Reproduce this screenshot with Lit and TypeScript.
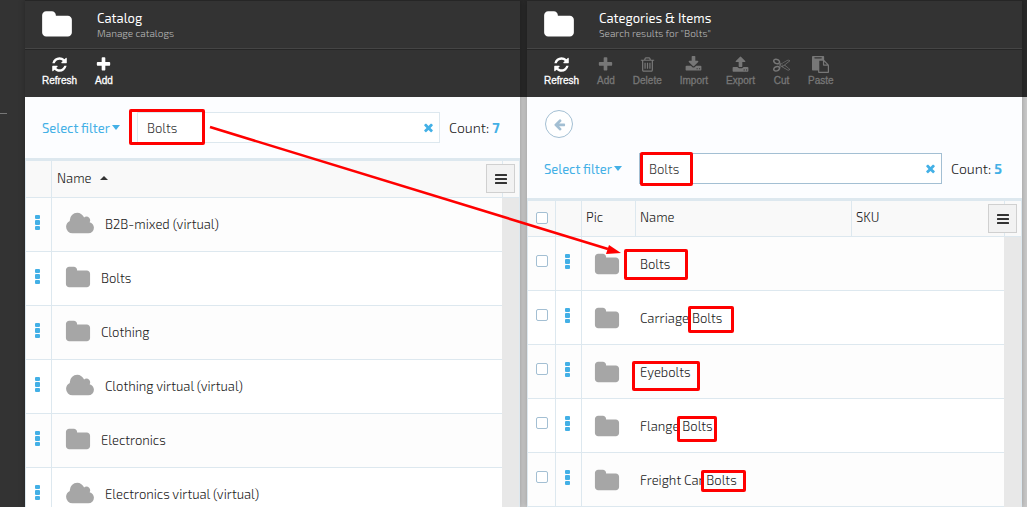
import { LitElement, html, svg, css, nothing } from "lit";
import { customElement, property } from "lit/decorators.js";
import { classMap } from "lit/directives/class-map.js";

const ICONS: Record<string, string> = {
  refresh: "M1639 1056q0 5-1 7-64 268-268 434.5t-478 166.5q-146 0-282.5-55t-243.5-157l-129 129q-19 19-45 19t-45-19-19-45v-448q0-26 19-45t45-19h448q26 0 45 19t19 45-19 45l-137 137q71 66 161 102t187 36q134 0 250-65t186-179q11-17 53-117 8-23 30-23h192q13 0 22.5 9.5t9.5 22.5zm25-800v448q0 26-19 45t-45 19h-448q-26 0-45-19t-19-45 19-45l138-138q-148-137-349-137-134 0-250 65t-186 179q-11 17-53 117-8 23-30 23h-199q-13 0-22.5-9.5t-9.5-22.5v-7q65-268 270-434.5t480-166.5q146 0 284 55.5t245 156.5l130-129q19-19 45-19t45 19 19 45z",
  add: "M1600 736v192q0 40-28 68t-68 28h-416v416q0 40-28 68t-68 28h-192q-40 0-68-28t-28-68v-416h-416q-40 0-68-28t-28-68v-192q0-40 28-68t68-28h416v-416q0-40 28-68t68-28h192q40 0 68 28t28 68v416h416q40 0 68 28t28 68z",
  trash: "M704 736v576q0 14-9 23t-23 9h-64q-14 0-23-9t-9-23v-576q0-14 9-23t23-9h64q14 0 23 9t9 23zm256 0v576q0 14-9 23t-23 9h-64q-14 0-23-9t-9-23v-576q0-14 9-23t23-9h64q14 0 23 9t9 23zm256 0v576q0 14-9 23t-23 9h-64q-14 0-23-9t-9-23v-576q0-14 9-23t23-9h64q14 0 23 9t9 23zm128 724v-948h-896v948q0 22 7 40.5t14.5 27 10.5 8.5h832q3 0 10.5-8.5t14.5-27 7-40.5zm-672-1076h448l-48-117q-7-9-17-11h-317q-10 2-17 11zm928 32v64q0 14-9 23t-23 9h-96v948q0 83-47 143.5t-113 60.5h-832q-66 0-113-58.5t-47-141.5v-952h-96q-14 0-23-9t-9-23v-64q0-14 9-23t23-9h309l70-167q15-37 54-63t79-26h320q40 0 79 26t54 63l70 167h309q14 0 23 9t9 23z",
  download: "M1344 1344q0-26-19-45t-45-19-45 19-19 45 19 45 45 19 45-19 19-45zm256 0q0-26-19-45t-45-19-45 19-19 45 19 45 45 19 45-19 19-45zm128-224v320q0 40-28 68t-68 28h-1472q-40 0-68-28t-28-68v-320q0-40 28-68t68-28h465l135 136q58 56 136 56t136-56l136-136h464q40 0 68 28t28 68zm-325-569q17 41-14 70l-448 448q-18 19-45 19t-45-19l-448-448q-31-29-14-70 17-39 59-39h256v-448q0-26 19-45t45-19h256q26 0 45 19t19 45v448h256q42 0 59 39z",
  upload: "M1344 1472q0-26-19-45t-45-19-45 19-19 45 19 45 45 19 45-19 19-45zm256 0q0-26-19-45t-45-19-45 19-19 45 19 45 45 19 45-19 19-45zm128-224v320q0 40-28 68t-68 28h-1472q-40 0-68-28t-28-68v-320q0-40 28-68t68-28h427q21 56 70.5 92t110.5 36h256q61 0 110.5-36t70.5-92h427q40 0 68 28t28 68zm-325-648q-17 40-59 40h-256v448q0 26-19 45t-45 19h-256q-26 0-45-19t-19-45v-448h-256q-42 0-59-40-17-39 14-69l448-448q18-19 45-19t45 19l448 448q31 30 14 69z",
  cut: "M960 896q26 0 45 19t19 45-19 45-45 19-45-19-19-45 19-45 45-19zm300 64l507 398q28 20 25 56-5 35-35 51l-128 64q-13 7-29 7-17 0-31-8l-690-387-110 66q-8 4-12 5 14 49 10 97-7 77-56 147.5t-132 123.5q-132 84-277 84-136 0-222-78-90-84-79-207 7-76 56-147t131-124q132-84 278-84 83 0 151 31 9-13 22-22l122-73-122-73q-13-9-22-22-68 31-151 31-146 0-278-84-82-53-131-124t-56-147q-5-59 15.5-113t63.5-93q85-79 222-79 145 0 277 84 83 52 132 123t56 148q4 48-10 97 4 1 12 5l110 66 690-387q14-8 31-8 16 0 29 7l128 64q30 16 35 51 3 36-25 56zm-681-260q46-42 21-108t-106-117q-92-59-192-59-74 0-113 36-46 42-21 108t106 117q92 59 192 59 74 0 113-36zm-85 745q81-51 106-117t-21-108q-39-36-113-36-100 0-192 59-81 51-106 117t21 108q39 36 113 36 100 0 192-59zm178-613l96 58v-11q0-36 33-56l14-8-79-44-26 26q-3 3-10 11t-12 12q-2 2-4 3.5t-3 2.5zm224 224l96 32 736-576-128-64-768 431v113l-160 96 9 8q2 2 7 6 4 4 11 12t11 12l26 26zm704 416l128-64-520-408-177 138q-2 3-13 7z",
  paste: "M768 1664h896v-640h-416q-40 0-68-28t-28-68v-416h-384v1152zm256-1440v-64q0-13-9.5-22.5t-22.5-9.5h-704q-13 0-22.5 9.5t-9.5 22.5v64q0 13 9.5 22.5t22.5 9.5h704q13 0 22.5-9.5t9.5-22.5zm256 672h299l-299-299v299zm512 128v672q0 40-28 68t-68 28h-960q-40 0-68-28t-28-68v-160h-544q-40 0-68-28t-28-68v-1344q0-40 28-68t68-28h1088q40 0 68 28t28 68v328q21 13 36 28l408 408q28 28 48 76t20 88z",
  folder: "M1728 608v704q0 92-66 158t-158 66h-1216q-92 0-158-66t-66-158v-960q0-92 66-158t158-66h320q92 0 158 66t66 158v32h672q92 0 158 66t66 158z",
  cloud: "M1984 1152q0 159-112.5 271.5t-271.5 112.5h-1088q-185 0-316.5-131.5t-131.5-316.5q0-132 71-241.5t187-163.5q-2-28-2-43 0-212 150-362t362-150q158 0 286.5 88t187.5 230q70-62 166-62 106 0 181 75t75 181q0 75-41 138 129 30 213 134.5t84 239.5z",
  times: "M1490 1322q0 40-28 68l-136 136q-28 28-68 28t-68-28l-294-294-294 294q-28 28-68 28t-68-28l-136-136q-28-28-28-68t28-68l294-294-294-294q-28-28-28-68t28-68l136-136q28-28 68-28t68 28l294 294 294-294q28-28 68-28t68 28l136 136q28 28 28 68t-28 68l-294 294 294 294q28 28 28 68z",
  back: "M1664 896v128q0 53-32.5 90.5t-84.5 37.5h-704l293 294q38 36 38 90t-38 90l-75 76q-37 37-90 37-52 0-91-37l-651-652q-37-37-37-90 0-52 37-91l651-650q38-38 91-38 52 0 90 38l75 74q38 38 38 91t-38 91l-293 293h704q52 0 84.5 37.5t32.5 90.5z",
};

const icon = (name: string, size: number) => {
  const box = name === "cloud" ? 2048 : 1792;
  return html`<svg width=${Math.round((size * box) / 1792)} height=${size} viewBox="0 0 ${box} 1792" fill="currentColor" aria-hidden="true"><path d=${ICONS[name]} /></svg>`;
};

const dots = html`<svg width="5" height="16" viewBox="0 0 5 16" fill="currentColor" aria-hidden="true">
  <rect width="5" height="4" rx="1" /><rect y="5" width="5" height="5" rx="1" /><rect y="11" width="5" height="4" rx="1" />
</svg>`;

const bars = html`<svg width="12" height="10" viewBox="0 0 12 10" fill="currentColor" aria-hidden="true">
  <rect y="0" width="12" height="2" rx="0.5" /><rect y="4" width="12" height="2" rx="0.5" /><rect y="8" width="12" height="2" rx="0.5" />
</svg>`;

interface Tool { icon: string; label: string; enabled: boolean }
interface Row { name: string; virtual?: boolean }

@customElement("app-blade")
export class AppBlade extends LitElement {
  @property() heading = "";
  @property() subheading = "";
  @property() keyword = "";
  @property({ type: Number }) count = 0;
  @property({ type: Boolean }) detailed = false;
  @property({ attribute: false }) tools: Tool[] = [];
  @property({ attribute: false }) rows: Row[] = [];

  static styles = css`
    :host {
      display: flex;
      flex-direction: column;
      flex: 1 1 0;
      min-width: 0;
      background: #fcfdff;
      box-shadow: 0 0 6px rgba(0, 0, 0, 0.25);
      color: #222;
      font: 300 13px/18px "Exo 2", Roboto, sans-serif;
    }
    button { border: 0; padding: 0; background: none; font: inherit; color: inherit; }
    svg { display: block; flex: none; }
    header { background: #333; color: #fff; border-top: 1px solid #262626; }
    .title {
      display: flex;
      align-items: center;
      gap: 24px;
      height: 48px;
      padding-left: 16px;
      border-bottom: 1px solid #454545;
      box-sizing: border-box;
    }
    h1 { margin: 0; font-size: 13px; line-height: 17px; font-weight: 400; }
    .sub { margin: 0; font-size: 10px; line-height: 13px; color: #bbb; }
    .tools {
      display: flex;
      gap: 18px;
      height: 48px;
      padding: 6px 17px 0;
      border-top: 1px solid #262626;
      box-sizing: border-box;
    }
    .tool {
      display: flex;
      flex-direction: column;
      align-items: center;
      gap: 1px;
      height: 32px;
      font: 10px/14px "Liberation Sans", sans-serif;
      -webkit-text-stroke: 0.3px currentColor;
    }
    .tool:disabled { color: #777; }
    .back {
      display: flex;
      align-items: center;
      justify-content: center;
      width: 28px;
      height: 28px;
      margin: 13px 0 0 18px;
      border: 1px solid #a3bfd3;
      border-radius: 50%;
      background: #fff;
      color: #a3bfd3;
    }
    .search { display: flex; align-items: center; padding: 15px 18px 15px 17px; }
    :host([detailed]) .search { padding-bottom: 14px; }
    .filter { display: flex; align-items: center; gap: 2px; width: 95px; font-weight: 400; color: #43b0e6; flex: none; }
    .field {
      position: relative;
      display: flex;
      align-items: center;
      flex: 1;
      min-width: 0;
      height: 31px;
      border: 1px solid #dde8ef;
      background: #fff;
      box-sizing: border-box;
      padding-right: 4px;
    }
    .field.focus { border-color: #a3bfd3; }
    input[type="search"] {
      flex: 1;
      min-width: 0;
      border: 0;
      outline: 0;
      padding: 0 9px;
      background: none;
      appearance: none;
      font: inherit;
      color: #333;
    }
    input::-webkit-search-cancel-button { display: none; }
    .clear { color: #43b0e6; }
    .count { min-width: 53px; margin-left: 9px; font-size: 14px; white-space: nowrap; }
    .count b { font-weight: 700; color: #43b0e6; }
    .grid { position: relative; flex: 1; min-height: 0; border-top: 3px solid #dde8ef; }
    .menu {
      position: absolute;
      top: 3px;
      right: 5px;
      display: flex;
      align-items: center;
      justify-content: center;
      width: 29px;
      height: 29px;
      border: 1px solid #d0d0d0;
      background: #f2f2f2;
      color: #333;
    }
    table { width: 100%; table-layout: fixed; border-collapse: separate; border-spacing: 0; }
    th, td { padding: 0; box-sizing: border-box; border-left: 1px solid #dde8ef; border-bottom: 1px solid #dde8ef; text-align: left; }
    th { height: 37px; background: #f9f9f9; font-weight: inherit; padding: 0 5px 3px; }
    .detailed th { height: 36px; padding: 0 4px 3px; }
    td { height: 54px; background: #fdfdfd; }
    tr:nth-child(even) td { background: #fff; }
    .check { width: 28px; }
    .act { width: 26px; }
    .pic { width: 54px; }
    .sku { width: 153px; }
    .edge { width: 18px; }
    td.track, tr:nth-child(even) td.track { background: #e8e8e8; border: 0; border-right: 1px solid #dde8ef; }
    th:last-child { border-right: 1px solid #dde8ef; }
    td.plain { border-left: 0; }
    .sort { display: inline-flex; align-items: center; gap: 8px; }
    .dots { display: flex; justify-content: center; width: 100%; padding: 0 2px 3px 0; box-sizing: border-box; color: #43b0e6; }
    .item { display: flex; align-items: center; gap: 10px; padding: 0 0 2px 13px; }
    .item svg, .thumb { color: #a6a6a6; }
    .thumb { display: flex; padding: 2px 0 0 12px; }
    .label { padding: 1px 5px 0; }
    input[type="checkbox"] {
      display: block;
      width: 12px;
      height: 12px;
      margin: 0 auto;
      appearance: none;
      box-sizing: border-box;
      border: 1px solid #a3bfd3;
      border-radius: 2px;
      background: #fff;
    }
    td input[type="checkbox"] { margin-bottom: 6px; }
    .detailed th.box { padding: 0 0 2px; }
  `;

  private renderRow(row: Row) {
    const menu = html`<td><button class="dots" aria-label="Actions for ${row.name}">${dots}</button></td>`;
    return this.detailed
      ? html`<tr>
          <td><input type="checkbox" aria-label="Select ${row.name}" /></td>
          ${menu}
          <td><span class="thumb">${icon("folder", 26)}</span></td>
          <td class="plain"><div class="label">${row.name}</div></td>
          <td class="plain"></td>
          <td class="track"></td>
        </tr>`
      : html`<tr>
          ${menu}
          <td><div class="item">${icon(row.virtual ? "cloud" : "folder", 26)}<span>${row.name}</span></div></td>
          <td class="track"></td>
        </tr>`;
  }

  render() {
    return html`
      <header>
        <div class="title">
          ${icon("folder", 32)}
          <div><h1>${this.heading}</h1><p class="sub">${this.subheading}</p></div>
        </div>
        <nav class="tools">
          ${this.tools.map((t) => html`<button class="tool" ?disabled=${!t.enabled}>${icon(t.icon, 17)}<span>${t.label}</span></button>`)}
        </nav>
      </header>
      ${this.detailed ? html`<button class="back" aria-label="Back">${icon("back", 13)}</button>` : nothing}
      <div class="search">
        <button class="filter">Select filter
          <svg width="8" height="5" viewBox="0 0 8 5" fill="currentColor" aria-hidden="true"><path d="M0 0h8L4 5z" /></svg>
        </button>
        <div class=${classMap({ field: true, focus: this.detailed })}>
          <input type="search" aria-label="Search keyword" .value=${this.keyword} />
          <button class="clear" aria-label="Clear keyword">${icon("times", 13)}</button>
        </div>
        <span class="count">Count: <b>${this.count}</b></span>
      </div>
      <div class="grid">
        <table class=${classMap({ detailed: this.detailed })}>
          <thead>
            <tr>
              ${this.detailed
                ? html`<th class="check box"><input type="checkbox" aria-label="Select all" /></th>
                    <th class="act"></th><th class="pic">Pic</th><th>Name</th><th class="sku">SKU</th>`
                : html`<th class="act"></th>
                    <th><span class="sort">Name
                      <svg width="8" height="4" viewBox="0 0 8 4" fill="#333" aria-hidden="true"><path d="M0 4h8L4 0z" /></svg></span></th>`}
              <th class="edge"></th>
            </tr>
          </thead>
          <tbody>${this.rows.map((r) => this.renderRow(r))}</tbody>
        </table>
        <button class="menu" aria-label="Grid menu">${bars}</button>
      </div>
    `;
  }
}

/* x, y, width, height of each highlight frame */
const FRAMES = [
  [129, 109, 76, 36],
  [640, 152, 53, 34],
  [624, 249, 64, 31],
  [688, 306, 46, 27],
  [632, 361, 68, 30],
  [677, 416, 40, 26],
  [701, 470, 45, 22],
];

@customElement("app-root")
export class AppRoot extends LitElement {
  static styles = css`
    :host { display: block; position: relative; height: 100vh; overflow: hidden; }
    main {
      display: flex;
      gap: 7px;
      height: 100%;
      padding-right: 5px;
      box-sizing: border-box;
      background: linear-gradient(#292929 97px, #cacaca 97px);
    }
    aside { width: 25px; flex: none; margin-right: -7px; padding-top: 113px; background: #333; box-sizing: border-box; }
    hr { width: 7px; margin: 0; border: 0; border-top: 1px solid #777; }
    .marks { position: absolute; inset: 0; width: 100%; height: 100%; pointer-events: none; }
  `;

  private catalogTools: Tool[] = [
    { icon: "refresh", label: "Refresh", enabled: true },
    { icon: "add", label: "Add", enabled: true },
  ];
  private itemTools: Tool[] = [
    { icon: "refresh", label: "Refresh", enabled: true },
    { icon: "add", label: "Add", enabled: false },
    { icon: "trash", label: "Delete", enabled: false },
    { icon: "download", label: "Import", enabled: false },
    { icon: "upload", label: "Export", enabled: false },
    { icon: "cut", label: "Cut", enabled: false },
    { icon: "paste", label: "Paste", enabled: false },
  ];
  private catalogs: Row[] = [
    { name: "B2B-mixed (virtual)", virtual: true },
    { name: "Bolts" },
    { name: "Clothing" },
    { name: "Clothing virtual (virtual)", virtual: true },
    { name: "Electronics" },
    { name: "Electronics virtual (virtual)", virtual: true },
  ];
  private items: Row[] = ["Bolts", "Carriage Bolts", "Eyebolts", "Flange Bolts", "Freight Car Bolts"].map((name) => ({ name }));

  render() {
    return html`
      <main>
        <aside><hr /></aside>
        <app-blade heading="Catalog" subheading="Manage catalogs" keyword="Bolts" count="7"
          .tools=${this.catalogTools} .rows=${this.catalogs}></app-blade>
        <app-blade detailed heading="Categories &amp; Items" subheading='Search results for "Bolts"' keyword="Bolts" count="5"
          .tools=${this.itemTools} .rows=${this.items}></app-blade>
      </main>
      <svg class="marks" fill="none" stroke="#f00" stroke-width="3" aria-hidden="true">
        ${FRAMES.map(([x, y, w, h]) => svg`<rect x=${x + 1.5} y=${y + 1.5} width=${w - 3} height=${h - 3} rx="0.5" />`)}
        <path d="M210 127L608 249" stroke-width="2.6" />
        <path d="M609 245L621 253L606 254z" fill="#f00" stroke="none" />
      </svg>
    `;
  }
}
